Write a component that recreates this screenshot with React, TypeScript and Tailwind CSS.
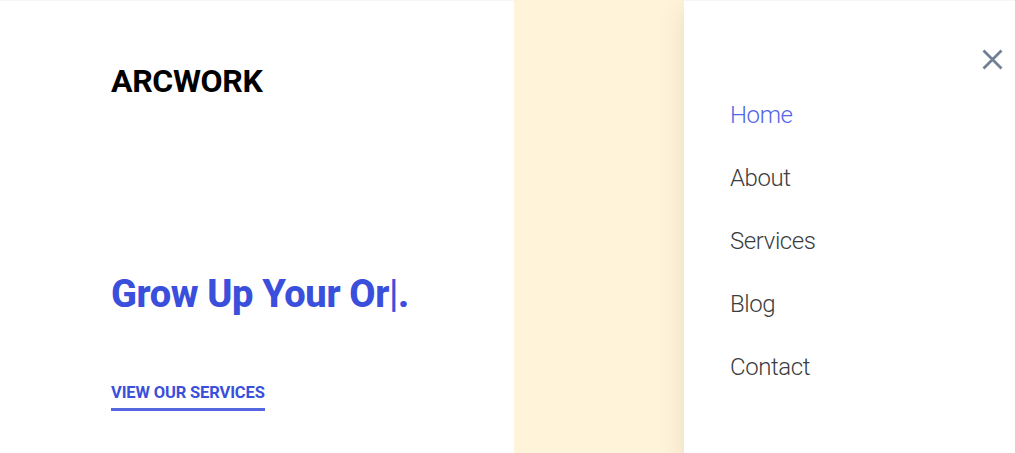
const links = ["Home", "About", "Services", "Blog", "Contact"];

export default function App() {
  return (
    <div className="flex h-[453px] w-[1015px] overflow-hidden bg-white font-['Roboto',sans-serif]">
      <main className="flex w-[514px] shrink-0 flex-col items-start border-t border-[#f6f6f6] pl-[111px]">
        <div className="mt-[60px] text-[32px] leading-10 font-bold tracking-[-0.35px] text-black">ARCWORK</div>
        <h1 className="mt-[168px] flex text-[38px] leading-[50px] font-extrabold tracking-[-0.36px] whitespace-pre text-[#3a4fdb]">
          <span>Grow Up Your Or</span><span className="font-medium">|</span><span>.</span>
        </h1>
        <a className="mt-[64px] border-b-3 border-[#5567e0] pb-[5px] text-[16.5px] leading-5 font-bold tracking-[-0.14px] whitespace-nowrap text-[#3a4fdb]">VIEW OUR SERVICES</a>
      </main>
      <div className="w-[170px] shrink-0 bg-[#fff4d9]" />
      <aside className="flex grow flex-col border-t border-[#f6f6f6] bg-white shadow-[0_10px_25px_rgba(0,0,0,0.1)]">
        <button className="mt-[48px] mr-[12px] self-end" aria-label="Close">
          <svg className="size-[21px]" viewBox="0 0 21 21" fill="none" stroke="#718096" strokeWidth="2.8">
            <path d="M1.5 1.5 19.5 19.5M19.5 1.5 1.5 19.5" />
          </svg>
        </button>
        <nav className="mt-[13px] flex flex-col pl-[46px]">
          {links.map((link, i) => (
            <a key={link} className={`flex h-[63px] items-center text-[24px] font-light tracking-[-0.4px] ${i === 0 ? "text-[#5364e6]" : "text-[#3b3d40]"}`}>{link}</a>
          ))}
        </nav>
      </aside>
    </div>
  );
}
